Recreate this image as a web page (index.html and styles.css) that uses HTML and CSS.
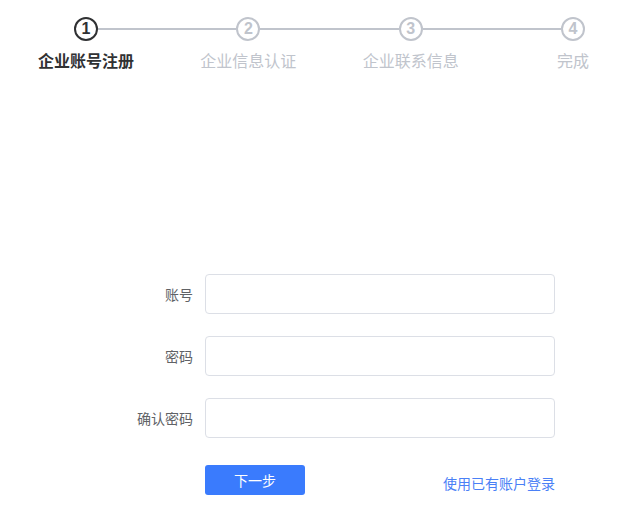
FILE: index.html
```html
<!DOCTYPE html>
<html lang="zh-CN">
<head>
<meta charset="utf-8">
<title>企业账号注册</title>
<link rel="stylesheet" href="styles.css">
</head>
<body>
<div class="steps">
  <div class="step active">
    <div class="step-icon">1</div>
    <div class="step-title">企业账号注册</div>
  </div>
  <div class="step-line"></div>
  <div class="step">
    <div class="step-icon">2</div>
    <div class="step-title">企业信息认证</div>
  </div>
  <div class="step-line"></div>
  <div class="step">
    <div class="step-icon">3</div>
    <div class="step-title">企业联系信息</div>
  </div>
  <div class="step-line"></div>
  <div class="step">
    <div class="step-icon">4</div>
    <div class="step-title">完成</div>
  </div>
</div>

<form class="form">
  <div class="form-item">
    <label class="form-label">账号</label>
    <input class="form-input" type="text">
  </div>
  <div class="form-item">
    <label class="form-label">密码</label>
    <input class="form-input" type="password">
  </div>
  <div class="form-item">
    <label class="form-label">确认密码</label>
    <input class="form-input" type="password">
  </div>
  <div class="form-actions">
    <button type="button" class="btn-primary">下一步</button>
    <a class="login-link" href="#">使用已有账户登录</a>
  </div>
</form>
</body>
</html>
```
FILE: styles.css
```css
html, body {
  margin: 0;
  padding: 0;
  background: #ffffff;
  font-family: "Liberation Sans", "Noto Sans CJK SC", sans-serif;
}

.steps {
  display: flex;
  width: 511px;
  margin-left: 74px;
  padding-top: 17px;
}

.step {
  width: 24px;
  display: flex;
  flex-direction: column;
  align-items: center;
  flex: none;
}

.step-icon {
  box-sizing: border-box;
  width: 24px;
  height: 24px;
  border: 2px solid #c0c4cc;
  border-radius: 50%;
  color: #c0c4cc;
  font-size: 16px;
  font-weight: 700;
  display: flex;
  align-items: center;
  justify-content: center;
  line-height: 1;
}

.step-title {
  white-space: nowrap;
  font-size: 16px;
  line-height: 38px;
  color: #c0c4cc;
  font-family: "Noto Sans CJK SC", sans-serif;
}

.step.active .step-icon {
  border-color: #303133;
  color: #303133;
}

.step.active .step-title {
  color: #303133;
  font-weight: 700;
}

.step-line {
  flex: 1;
  height: 2px;
  margin-top: 11px;
  background: #c0c4cc;
}

.form {
  margin-top: 195px;
  margin-left: 105px;
  width: 450px;
}

.form-item {
  display: flex;
  align-items: center;
  margin-bottom: 22px;
}

.form-label {
  box-sizing: border-box;
  width: 100px;
  padding-right: 12px;
  text-align: right;
  font-size: 14px;
  line-height: 18px;
  color: #606266;
  font-family: "Noto Sans CJK SC", sans-serif;
}

.form-input {
  box-sizing: border-box;
  width: 350px;
  height: 40px;
  border: 1px solid #dcdfe6;
  border-radius: 4px;
  padding: 0 15px;
  outline: none;
  font-size: 14px;
  background: #fff;
}

.form-actions {
  display: flex;
  justify-content: space-between;
  align-items: flex-end;
  margin-left: 100px;
  width: 350px;
  margin-top: 27px;
}

.btn-primary {
  width: 100px;
  height: 30px;
  border: none;
  border-radius: 3px;
  background: #3a7bfd;
  color: #ffffff;
  font-size: 14px;
  font-family: "Noto Sans CJK SC", sans-serif;
  padding: 0;
  cursor: pointer;
}

.login-link {
  font-size: 14px;
  line-height: 20px;
  margin-bottom: 2px;
  color: #4a80f6;
  text-decoration: none;
  font-family: "Noto Sans CJK SC", sans-serif;
}
```
